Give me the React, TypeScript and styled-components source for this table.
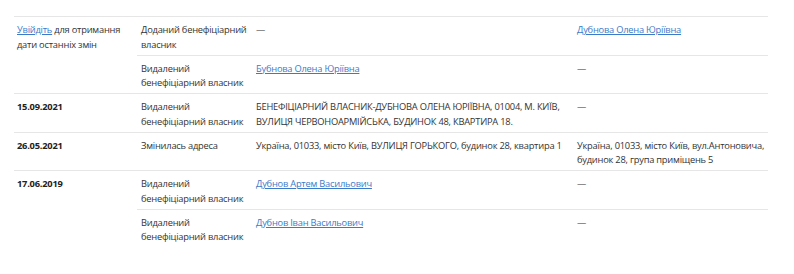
import React, { FC } from "react";
import styled, { createGlobalStyle } from "styled-components";

const GlobalStyle = createGlobalStyle`
	html, body {
		margin: 0;
		padding: 0;
		background: #ffffff;
	}
	body {
		font-family: "Open Sans", "Noto Sans", Arial, sans-serif;
		font-size: 9.3px;
		letter-spacing: -0.22px;
		color: #333333;
	}
`;

const Table = styled.div`
	margin: 16px 0 0 14px;
	width: 754px;
`;

const Group = styled.div`
	display: flex;
	border-top: 1px solid #e6e6e6;
`;

const DateCell = styled.div<{ $bold?: boolean }>`
	width: 123px;
	flex-shrink: 0;
	box-sizing: border-box;
	padding: 6px 2px 2.5px 3px;
	line-height: 14.5px;
	font-weight: ${(props) => (props.$bold ? 700 : 400)};
	color: ${(props) => (props.$bold ? "#222222" : "#333333")};
`;

const SubRows = styled.div`
	flex: 1;
	display: flex;
	flex-direction: column;
`;

const SubRow = styled.div`
	display: grid;
	grid-template-columns: 115px 321px 195px;

	& + & {
		border-top: 1px solid #e6e6e6;
	}
`;

const Cell = styled.div`
	box-sizing: border-box;
	padding: 6px 1px 2.5px 4px;
	line-height: 14.5px;
`;

const Link = styled.a`
	color: #3b79c9;
	text-decoration: underline;
	cursor: pointer;
`;

type Change = {
	kind: string;
	before: React.ReactNode;
	after: React.ReactNode;
};

type GroupData = {
	date: React.ReactNode;
	bold: boolean;
	changes: Change[];
};

const groups: GroupData[] = [
	{
		date: (
			<>
				<Link>Увійдіть</Link> для отримання дати останніх змін
			</>
		),
		bold: false,
		changes: [
			{
				kind: "Доданий бенефіціарний власник",
				before: "—",
				after: <Link>Дубнова Олена Юріївна</Link>,
			},
			{
				kind: "Видалений бенефіціарний власник",
				before: <Link>Бубнова Олена Юріївна</Link>,
				after: "—",
			},
		],
	},
	{
		date: "15.09.2021",
		bold: true,
		changes: [
			{
				kind: "Видалений бенефіціарний власник",
				before:
					"БЕНЕФІЦІАРНИЙ ВЛАСНИК-ДУБНОВА ОЛЕНА ЮРІЇВНА, 01004, М. КИЇВ, ВУЛИЦЯ ЧЕРВОНОАРМІЙСЬКА, БУДИНОК 48, КВАРТИРА 18.",
				after: "—",
			},
		],
	},
	{
		date: "26.05.2021",
		bold: true,
		changes: [
			{
				kind: "Змінилась адреса",
				before: "Україна, 01033, місто Київ, ВУЛИЦЯ ГОРЬКОГО, будинок 28, квартира 1",
				after: "Україна, 01033, місто Київ, вул.Антоновича, будинок 28, група приміщень 5",
			},
		],
	},
	{
		date: "17.06.2019",
		bold: true,
		changes: [
			{
				kind: "Видалений бенефіціарний власник",
				before: <Link>Дубнов Артем Васильович</Link>,
				after: "—",
			},
			{
				kind: "Видалений бенефіціарний власник",
				before: <Link>Дубнов Іван Васильович</Link>,
				after: "—",
			},
		],
	},
];

const App: FC = () => {
	return (
		<>
			<GlobalStyle />
			<Table>
				{groups.map((group, i) => (
					<Group key={i}>
						<DateCell $bold={group.bold}>{group.date}</DateCell>
						<SubRows>
							{group.changes.map((change, j) => (
								<SubRow key={j}>
									<Cell>{change.kind}</Cell>
									<Cell>{change.before}</Cell>
									<Cell>{change.after}</Cell>
								</SubRow>
							))}
						</SubRows>
					</Group>
				))}
			</Table>
		</>
	);
};

export default App;
